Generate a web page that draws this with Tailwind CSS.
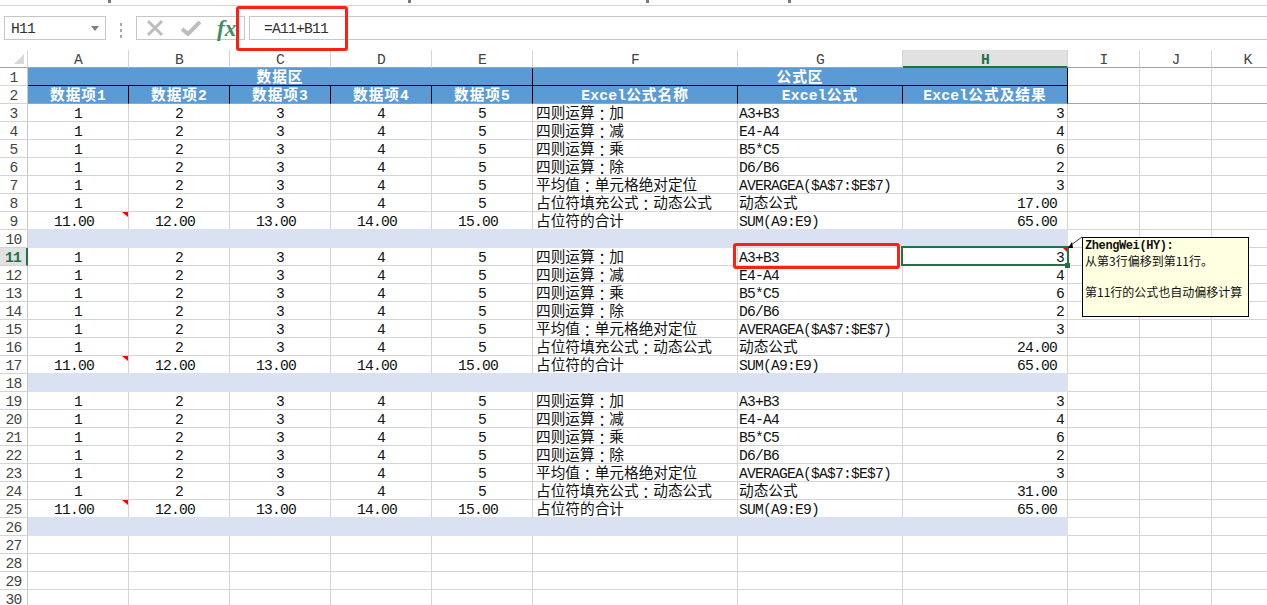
<!DOCTYPE html>
<html lang="zh-CN">
<head>
    <meta charset="UTF-8">
    <title>Excel 公式偏移</title>
    <script src="https://cdn.jsdelivr.net/npm/@tailwindcss/browser@4"></script>
</head>
<body class="bg-white">
    <div class="relative w-[1267px] h-[605px] overflow-hidden bg-white text-[14.67px] leading-none tracking-[-0.8px] text-[#111] font-['Liberation_Mono','Noto_Sans_CJK_SC',monospace]">

        <!-- ribbon remains -->
        <div class="flex h-[6px] border-b border-[#d4d4d4]">
            <div class="ml-[108px] w-[3px] h-[3px] bg-[#7a7a7a]"></div>
            <div class="ml-[297px] w-[3px] h-[3px] bg-[#7a7a7a]"></div>
            <div class="ml-[235px] w-[3px] h-[3px] bg-[#7a7a7a]"></div>
            <div class="ml-[139px] w-[3px] h-[3px] bg-[#7a7a7a]"></div>
        </div>

        <!-- formula bar -->
        <div class="flex items-start h-[44px] pt-[10px] pl-[4px]">
            <div class="flex items-center justify-between w-[102px] h-[24px] border border-[#c6c6c6] pl-[6px] pr-[6px] pt-[2px] text-[#333]">
                <span>H11</span>
                <svg class="mb-[2px]" width="8" height="5" viewBox="0 0 8 5"><path d="M0 0H8L4 5Z" fill="#7f7f7f"/></svg>
            </div>
            <div class="flex flex-col gap-[3px] ml-[14px] mt-[7px]">
                <div class="w-[2px] h-[3px] bg-[#a8a8a8]"></div>
                <div class="w-[2px] h-[3px] bg-[#a8a8a8]"></div>
                <div class="w-[2px] h-[3px] bg-[#a8a8a8]"></div>
            </div>
            <div class="flex items-center w-[109px] h-[24px] ml-[14px] border border-[#c6c6c6] pl-[9px]">
                <svg width="18" height="16" viewBox="0 0 18 16"><path d="M2 1L16 15M16 1L2 15" stroke="#bdbdbd" stroke-width="3" fill="none"/></svg>
                <svg class="ml-[17px]" width="20" height="16" viewBox="0 0 20 16"><path d="M1 9L7 14L19 2" stroke="#bdbdbd" stroke-width="4" fill="none"/></svg>
                <span class="ml-[16px] text-[23px] tracking-normal font-bold italic text-[#3f8f5f] font-['Liberation_Serif',serif]">fx</span>
            </div>
            <div class="flex items-center flex-1 h-[24px] ml-[4px] border-y border-l border-[#c6c6c6] pl-[14px] pt-[2px] text-[#333]">=A11+B11</div>
        </div>

        <!-- sheet, rows are filled in below -->
        <div id="sheet" class="grid grid-cols-[28px_101px_101px_101px_101px_101px_205px_165px_165px_72px_72px_72px] auto-rows-[18px] w-[1284px]"></div>

        <!-- overlays -->
        <div class="absolute left-[236px] top-[6px] w-[112px] h-[45px] border-[3px] border-[#ff2015] rounded-[3px]"></div>
        <div class="absolute left-[733px] top-[243px] w-[167px] h-[26px] border-[3px] border-[#ff2015] rounded-[3px]"></div>

        <div class="absolute left-[901px] top-[246px] w-[168px] h-[20px] border-2 border-[#217346]"></div>
        <div class="absolute left-[1065px] top-[263px] w-[5px] h-[5px] bg-[#217346]"></div>
        <svg class="absolute left-[1063px] top-[248px]" width="4" height="4" viewBox="0 0 4 4"><path d="M0 0H4V4Z" fill="#ff0000"/></svg>

        <svg class="absolute left-[1066px] top-[236px]" width="17" height="13" viewBox="0 0 17 13">
            <path d="M5 9L16 1" stroke="#444" stroke-width="1" fill="none"/>
            <path d="M2 12L7 12L6 6Z" fill="#000"/>
        </svg>
        <div class="absolute left-[1082px] top-[237px] w-[167px] h-[80px] border border-black bg-[#ffffe1] pl-[2px] pt-[1px] text-[12px] leading-[15px] tracking-normal">
            <div class="h-[14px] font-bold tracking-[-0.4px] font-['Liberation_Mono',monospace]">ZhengWei(HY):</div>
            <div class="font-['Noto_Sans_CJK_SC',sans-serif]">从第3行偏移到第11行。</div>
            <div class="h-[16px]"></div>
            <div class="font-['Noto_Sans_CJK_SC',sans-serif]">第11行的公式也自动偏移计算</div>
        </div>
    </div>

    <script>
        const cell = 'relative flex items-center pt-[4px] whitespace-nowrap border-r border-b border-[#d4d4d4] ';
        const colHead = 'flex items-center justify-center pt-[4px] border-r border-b border-r-[#d4d4d4] border-b-[#a3a3a3] text-[#444] ';
        const rowHead = 'flex items-center justify-center pt-[4px] border-r border-b border-r-[#c8c8c8] border-b-[#d4d4d4] text-[#444] ';
        const rowHeadOn = 'flex items-center justify-center pt-[4px] border-r-2 border-b border-r-[#217346] border-b-[#d4d4d4] bg-[#e1e1e1] text-[#217346] font-bold ';
        const blueTop = 'flex items-center justify-center pt-[4px] border-r border-b border-black bg-[#5b9bd5] text-white font-bold tracking-[0.2px] ';
        const blueSub = 'flex items-center justify-center pt-[4px] whitespace-nowrap border-r border-b border-r-black border-b-[#a3a3a3] bg-[#5b9bd5] text-white font-bold tracking-[0.2px] ';
        const flag = '<svg class="absolute right-0 top-0" width="6" height="5" viewBox="0 0 6 5"><path d="M0 0H6V5Z" fill="#ff0000"/></svg>';

        // CJK runs keep normal spacing, only the latin letters are squeezed to 8px
        const zh = (s, cls) => s.replace(/[^\x00-\x7f]+/g, m => `<span class="${cls}">${m}</span>`);
        // full-width colon, taken from the TC face which centres it like the original font
        const COLON = '\uFF1A';
        const body = s => s.split(COLON)
            .map(part => zh(part, 'tracking-normal'))
            .join(`<span class="tracking-normal font-['Noto_Sans_CJK_TC',sans-serif]">${COLON}</span>`);
        const head = s => zh(s, 'tracking-[1px]');

        const formulas = [
            ['四则运算' + COLON + '加', 'A3+B3', '3'],
            ['四则运算' + COLON + '减', 'E4-A4', '4'],
            ['四则运算' + COLON + '乘', 'B5*C5', '6'],
            ['四则运算' + COLON + '除', 'D6/B6', '2'],
            ['平均值' + COLON + '单元格绝对定位', 'AVERAGEA($A$7:$E$7)', '3'],
        ];

        let html = '<div class="flex items-end justify-end pr-[3px] pb-[3px] border-r border-b border-r-[#d4d4d4] border-b-[#a3a3a3]"><svg width="10" height="10" viewBox="0 0 10 10"><path d="M10 0V10H0Z" fill="#d8d8d8"/></svg></div>';
        'ABCDEFGHIJK'.split('').forEach(c => {
            html += c === 'H'
                ? `<div class="flex items-center justify-center pt-[4px] border-r border-b-2 border-r-[#d4d4d4] border-b-[#217346] bg-[#e1e1e1] text-[#217346] font-bold">${c}</div>`
                : `<div class="${colHead}">${c}</div>`;
        });

        const empties = border => [0, 1, 2].map(() => `<div class="${cell} ${border}"></div>`).join('');

        // row 1 and 2: merged titles
        html += `<div class="${rowHead}">1</div>`;
        html += `<div class="col-span-5 ${blueTop}">${head('数据区')}</div>`;
        html += `<div class="col-span-3 ${blueTop}">${head('公式区')}</div>`;
        html += empties('');
        html += `<div class="${rowHead}">2</div>`;
        ['数据项1', '数据项2', '数据项3', '数据项4', '数据项5', 'Excel公式名称', 'Excel公式', 'Excel公式及结果'].forEach(t => {
            html += `<div class="${blueSub}">${head(t)}</div>`;
        });
        html += empties('border-b-[#a3a3a3]');

        const dataRow = n => {
            html += `<div class="${n === 11 ? rowHeadOn : rowHead}">${n}</div>`;
            [1, 2, 3, 4, 5].forEach(v => {
                html += `<div class="${cell} justify-center">${v}</div>`;
            });
        };

        // three blocks of seven rows, each followed by a pale band
        [[3, '17.00'], [11, '24.00'], [19, '31.00']].forEach(([start, dyn]) => {
            formulas.forEach((f, i) => {
                dataRow(start + i);
                html += `<div class="${cell} pl-[3px]">${body(f[0])}</div>`;
                html += `<div class="${cell} pl-[1px]">${f[1]}</div>`;
                html += `<div class="${cell} justify-end pr-[3px]">${f[2]}</div>`;
                html += empties('');
            });

            dataRow(start + 5);
            html += `<div class="${cell} pl-[3px]">${body('占位符填充公式' + COLON + '动态公式')}</div>`;
            html += `<div class="${cell} pl-[1px]">${body('动态公式')}</div>`;
            html += `<div class="${cell} justify-end pr-[10px]">${dyn}</div>`;
            html += empties('');

            const last = 'border-b-[#d9e1f2]';
            html += `<div class="${rowHead}">${start + 6}</div>`;
            ['11.00', '12.00', '13.00', '14.00', '15.00'].forEach((v, i) => {
                html += `<div class="${cell} ${last} justify-center pr-[8px]">${v}${i === 0 ? flag : ''}</div>`;
            });
            html += `<div class="${cell} ${last} pl-[3px]">${body('占位符的合计')}</div>`;
            html += `<div class="${cell} ${last} pl-[1px]">SUM(A9:E9)</div>`;
            html += `<div class="${cell} ${last} justify-end pr-[10px]">65.00</div>`;
            html += empties('');

            html += `<div class="${rowHead}">${start + 7}</div>`;
            html += '<div class="col-span-8 bg-[#d9e1f2]"></div>';
            html += empties('');
        });

        for (let n = 27; n <= 30; n++) {
            html += `<div class="${rowHead}">${n}</div>`;
            for (let c = 0; c < 11; c++) html += `<div class="${cell}"></div>`;
        }

        document.getElementById('sheet').innerHTML = html;
    </script>
</body>
</html>
